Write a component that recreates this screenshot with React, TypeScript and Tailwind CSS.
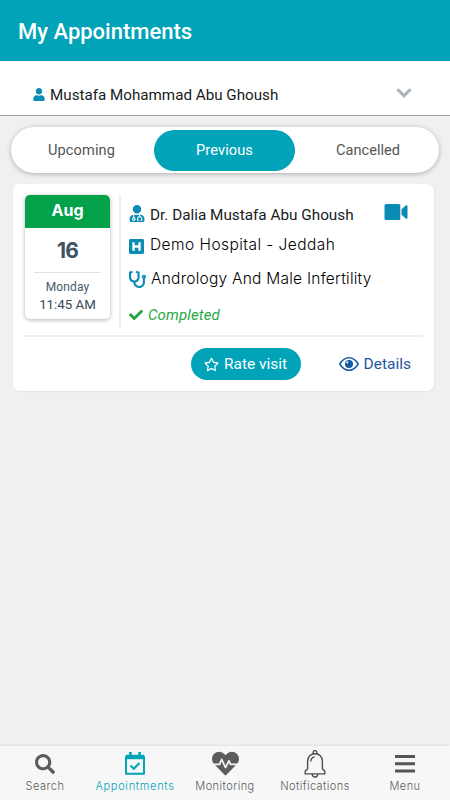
import React, { useState } from 'react';
import { FaCheck, FaHeartbeat, FaRegStar, FaSearch, FaStethoscope, FaUser, FaUserMd } from 'react-icons/fa';

const tabs = [
  { label: 'Upcoming', spacing: 'tracking-[0.1px] pr-[4px]' },
  { label: 'Previous', spacing: 'tracking-[0.1px]' },
  { label: 'Cancelled', spacing: 'pl-[5px]' },
];

const HospitalIcon = () => (
  <svg viewBox="0 0 16 16" className="h-[15px] w-[15px]" fill="none">
    <rect width="16" height="16" rx="1.5" fill="#0a8bb3" />
    <path d="M4.8 3.4v9.2M11.2 3.4v9.2M4.8 8h6.4" stroke="#fff" strokeWidth="2.5" />
  </svg>
);

const VideoIcon = () => (
  <svg viewBox="0 0 24 16" className="h-4 w-6" fill="#0a8bb3">
    <rect x="0.5" y="0" width="15.8" height="16" rx="1.5" />
    <path d="M17.5 5.2 21.8 1.6q1.7-1 1.7.7v11.4q0 1.7-1.7.7l-4.3-3.6z" />
  </svg>
);

const EyeIcon = () => (
  <svg viewBox="0 0 20 14" className="h-[14px] w-5" fill="none">
    <path d="M.8 7Q4.5.8 10 .8T19.2 7Q15.5 13.2 10 13.2T.8 7Z" stroke="#0f5ca5" strokeWidth="1.5" />
    <circle cx="10" cy="7" r="4" fill="#0f5ca5" />
    <circle cx="8.3" cy="5.3" r="1.1" fill="#fff" />
  </svg>
);

const CalendarIcon = () => (
  <svg viewBox="0 0 20 23" className="mb-px h-[23px] w-5" fill="none" stroke="#00a3b8">
    <path d="M1 5h18v16.8H1z" strokeWidth="2" strokeLinejoin="round" />
    <path d="M.8 5h18.4" strokeWidth="4.4" />
    <path d="M5.4 0v4M14.6 0v4" strokeWidth="2.6" />
    <path d="m5.5 13.6 3.3 3.2 5.7-5.8" strokeWidth="2.1" />
  </svg>
);

const BellIcon = () => (
  <svg viewBox="0 0 22 28" className="h-7 w-[22px]" fill="none" stroke="#4d4d4d" strokeWidth="1.4">
    <path d="M9.2 4V2.4a1.8 1.8 0 0 1 3.6 0V4" />
    <path d="M3.6 19V11.3C3.6 6.8 6.8 3.8 11 3.8s7.4 3 7.4 7.5V19l2.4 2.1v2.8H1.2v-2.8z" />
    <path d="M8.3 24c0 1.9 1 3 2.7 3s2.7-1.1 2.7-3" />
    <path d="M6.8 11.4c0-2.4 1.4-4.1 3.9-4.5" />
  </svg>
);

const MenuIcon = () => (
  <svg viewBox="0 0 20 18" className="h-[18px] w-5" fill="#555">
    <path d="M0 0h20v3H0zM0 7.3h20v3H0zM0 14.6h20v3H0z" />
  </svg>
);

const navItems = [
  { label: 'Search', icon: <FaSearch size={20} />, spacing: 'tracking-[0.5px]' },
  { label: 'Appointments', icon: <CalendarIcon />, spacing: 'tracking-[0.7px]' },
  { label: 'Monitoring', icon: <FaHeartbeat size={27} />, spacing: 'tracking-[0.45px]' },
  { label: 'Notifications', icon: <BellIcon />, spacing: 'tracking-[0.45px]' },
  { label: 'Menu', icon: <MenuIcon />, spacing: 'tracking-[0.45px]' },
];

function DateBox() {
  return (
    <div className="flex h-[124px] w-[85px] shrink-0 flex-col items-center overflow-hidden rounded-[5px] bg-white shadow-[0_1px_4px_rgba(60,70,90,0.4)]">
      <div className="flex h-[33px] w-full justify-center bg-[#04a14b] pt-[3px] font-['Inter',sans-serif] text-[16px] leading-6 font-bold text-white">
        Aug
      </div>
      <div className="mt-[7px] font-['Inter',sans-serif] text-[21px] leading-[32px] font-bold tracking-[-0.8px] text-[#3f5261]">
        16
      </div>
      <div className="mt-[5px] h-px w-[67px] bg-[#dfe2e6]" />
      <div className="mt-[6px] text-[12px] leading-[17px] tracking-[0.1px] text-[#4a5a68]">Monday</div>
      <div className="text-[13.3px] leading-[17px] text-[#384a5a]">11:45 AM</div>
    </div>
  );
}

function AppointmentCard() {
  return (
    <div className="mx-auto mt-[11px] mr-4 ml-[13px] h-[207px] rounded-[7px] bg-white px-3 pt-[11px] shadow-[1px_1px_2px_#dfe4e9]">
      <div className="flex h-[133px]">
        <DateBox />
        <div className="ml-[9px] w-[2px] bg-[#eceef1]" />
        <div className="ml-2 flex flex-1 flex-col whitespace-nowrap text-black">
          <div className="flex h-[34px] items-center pt-1.5">
            <FaUserMd size={17} className="mr-[5px] w-4 text-[#0a8bb3]" />
            <span className="pt-[2px] text-[15.3px] leading-5 text-[#1a1a1a]">Dr. Dalia Mustafa Abu Ghoush</span>
            <span className="-mt-1 mr-[14px] ml-auto">
              <VideoIcon />
            </span>
          </div>
          <div className="flex h-9 items-center gap-[6px] pt-[5px] font-['Inter',sans-serif] text-[15.5px] font-light">
            <HospitalIcon />
            <span className="mb-[3px] tracking-[0.45px]">Demo Hospital - Jeddah</span>
          </div>
          <div className="flex h-8 items-center gap-[5px] pt-[6px] font-['Inter',sans-serif] text-[15.5px] font-light">
            <FaStethoscope size={17} className="text-[#0a8bb3]" />
            <span className="mb-[2px] tracking-[0.25px]">Andrology And Male Infertility</span>
          </div>
          <div className="flex h-[38px] items-center gap-[5px] pt-[10px] text-[15px] text-[#1fa83f]">
            <FaCheck size={14} />
            <span className="tracking-[0.15px] italic">Completed</span>
          </div>
        </div>
      </div>
      <div className="mt-[7px] -mr-[1px] -ml-[1px] h-[2px] bg-[#eceef1]" />
      <div className="mt-[11px] flex h-8 items-center justify-end">
        <button className="flex h-8 w-[110px] items-center justify-center gap-[5px] rounded-full bg-[#00a3b8] text-[15.5px] whitespace-nowrap text-white">
          <FaRegStar size={15} />
          <span className="pt-[2px]">Rate visit</span>
        </button>
        <button className="mr-[11px] ml-[38px] flex items-center gap-[5px] text-[15.5px] text-[#1e55a3]">
          <EyeIcon />
          <span className="pt-[2px]">Details</span>
        </button>
      </div>
    </div>
  );
}

export default function App() {
  const [activeTab, setActiveTab] = useState('Previous');

  return (
    <div className="flex h-screen w-full flex-col overflow-hidden bg-[#f0f0f0] font-['Roboto',sans-serif]">
      <header className="flex h-[61px] shrink-0 items-center bg-[#00a3b8] pt-px pl-[18px] text-[22px] font-medium text-white">
        My Appointments
      </header>

      {/* Patient selector */}
      <div className="flex h-[55px] shrink-0 items-center border-b border-[#9da3ac] bg-white pt-3 pr-[38px] pl-[33px]">
        <FaUser size={13} className="w-3 text-[#0a8bb3]" />
        <span className="ml-[5px] pt-[3px] text-[15.2px] text-[#1a1a1a]">Mustafa Mohammad Abu Ghoush</span>
        <svg viewBox="0 0 16 10" className="mb-[3px] ml-auto h-[10px] w-4" fill="none" stroke="#abb1b9" strokeWidth="3">
          <path d="M1.5 1.3 8 7.8l6.5-6.5" />
        </svg>
      </div>

      <div className="mx-[11px] mt-[11px] grid h-[46px] shrink-0 grid-cols-[141px_141px_141px] place-content-center rounded-full bg-white pr-px shadow-[0_1px_5px_rgba(0,0,0,0.28)]">
        {tabs.map((tab) => (
          <button
            key={tab.label}
            onClick={() => setActiveTab(tab.label)}
            className={`flex h-[41px] items-center justify-center rounded-full pt-[2px] text-[14.6px] ${tab.spacing} ${
              activeTab === tab.label ? 'bg-[#00a3b8] text-white' : 'text-[#555]'
            }`}
          >
            {tab.label}
          </button>
        ))}
      </div>

      <AppointmentCard />

      <nav className="mt-auto grid h-[54px] shrink-0 grid-cols-5 bg-[#f7f7f7] shadow-[0_-1px_2px_rgba(0,0,0,0.06)]">
        {navItems.map((item) => (
          <div
            key={item.label}
            className={`flex flex-col items-center ${item.label === 'Appointments' ? 'text-[#00a3b8]' : 'text-[#5c5c5c]'}`}
          >
            <div className="mt-[3px] flex h-[29px] items-center justify-center">{item.icon}</div>
            <span className={`font-['Inter',sans-serif] text-[11px] leading-4 font-light whitespace-nowrap ${item.spacing}`}>{item.label}</span>
          </div>
        ))}
      </nav>
    </div>
  );
}
